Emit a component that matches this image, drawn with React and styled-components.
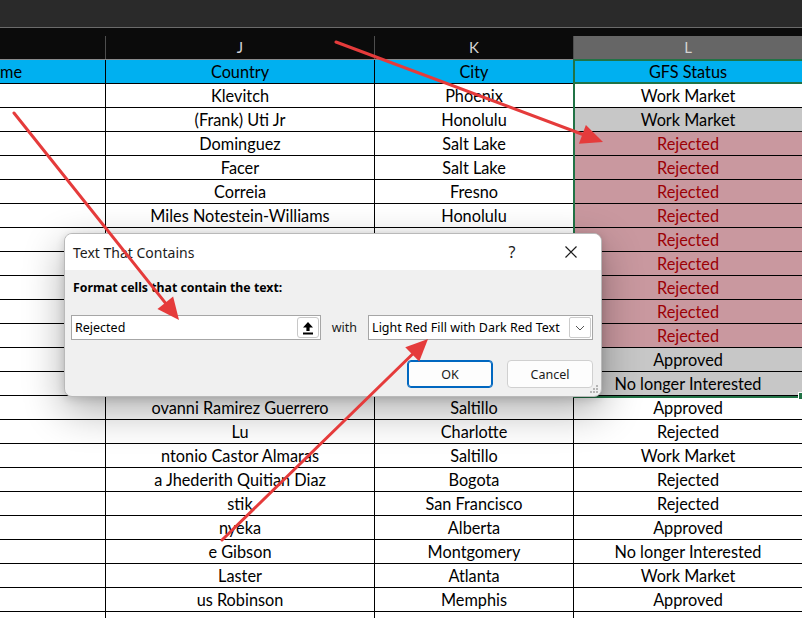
import React from "react";
import styled, { createGlobalStyle } from "styled-components";

const GlobalStyle = createGlobalStyle`
  html, body { margin: 0; padding: 0; background: #ffffff; overflow: hidden; }
  #root { width: 802px; height: 618px; }
`;

const COLS = "106px 269px 199px 1fr";

const Page = styled.div`
  position: relative;
  width: 802px;
  height: 618px;
  overflow: hidden;
  background: #ffffff;
  font-family: Lato, "Liberation Sans", sans-serif;
`;

const TopBar = styled.div`
  height: 27px;
  background: #2a2a2a;
  border-bottom: 1px solid #6b6b6b;
`;

const LetterBar = styled.div`
  display: grid;
  grid-template-columns: ${COLS};
  align-items: end;
  height: 31px;
  background: #0b0b0b;
  border-bottom: 1px solid #8a8a8a;
`;

const Letter = styled.div`
  height: 23px;
  line-height: 23px;
  text-align: center;
  font-size: 15px;
  color: #d4d4d4;
  border-right: ${(p) => (p.$last ? "none" : "1px solid #4e4e4e")};
  background: ${(p) => (p.$selected ? "#666666" : "transparent")};
`;

const Row = styled.div`
  display: grid;
  grid-template-columns: ${COLS};
  height: 24px;
`;

const Cell = styled.div`
  height: 23px;
  line-height: 24px;
  text-align: ${(p) => (p.$left ? "left" : "center")};
  font-size: 16.3px;
  color: ${(p) => p.$color || "#000000"};
  background: ${(p) => p.$bg || "#ffffff"};
  border-bottom: 1px solid #000000;
  border-right: ${(p) => (p.$last ? "none" : "1px solid #000000")};
  white-space: nowrap;
  overflow: hidden;
`;

const Selection = styled.div`
  position: absolute;
  left: 573px;
  top: 59px;
  width: 240px;
  height: 335px;
  border: 2px solid #217346;
  pointer-events: none;
`;

const SelectionHeaderLine = styled.div`
  position: absolute;
  left: 573px;
  top: 82px;
  width: 240px;
  height: 2px;
  background: #217346;
`;

const FillHandle = styled.div`
  position: absolute;
  left: 798px;
  top: 392px;
  width: 6px;
  height: 6px;
  background: #217346;
  border: 1px solid #ffffff;
`;

/* ---------- dialog ---------- */

const Dialog = styled.div`
  position: absolute;
  left: 64px;
  top: 233px;
  width: 538px;
  height: 164px;
  box-sizing: border-box;
  border: 1px solid #b9b9b9;
  border-radius: 8px;
  background: #f0f0f0;
  box-shadow: 0 14px 40px rgba(0, 0, 0, 0.32), 0 2px 8px rgba(0, 0, 0, 0.15);
  overflow: hidden;
  font-family: "Noto Sans", "Open Sans", sans-serif;
  display: flex;
  flex-direction: column;
`;

const TitleBar = styled.div`
  height: 36px;
  background: #ffffff;
  display: flex;
  align-items: center;
  padding-left: 8px;
`;

const Title = styled.div`
  flex: 1;
  font-size: 14px;
  color: #1b1b1b;
  padding-top: 1px;
`;

const TitleButton = styled.div`
  width: ${(p) => p.$w}px;
  height: 36px;
  display: flex;
  align-items: center;
  justify-content: center;
  font-size: 16px;
  color: #1b1b1b;
`;

const Body = styled.div`
  flex: 1;
  display: flex;
  flex-direction: column;
  padding: 0 8px 0 6px;
`;

const Prompt = styled.div`
  margin: 9px 0 0 2px;
  font-size: 12.3px;
  font-weight: 700;
  color: #000000;
  height: 18px;
  line-height: 18px;
`;

const FieldRow = styled.div`
  display: flex;
  align-items: center;
  margin-top: 18px;
  height: 25px;
`;

const TextField = styled.div`
  width: 251px;
  height: 25px;
  box-sizing: border-box;
  border: 1px solid #a6a6a6;
  background: #ffffff;
  display: flex;
  align-items: center;
  padding: 0 1px 0 3px;
`;

const FieldText = styled.div`
  flex: 1;
  font-size: 12.5px;
  color: #000000;
`;

const RefButton = styled.div`
  width: 22px;
  height: 21px;
  box-sizing: border-box;
  border: 1px solid #c8c8c8;
  border-radius: 3px;
  background: #ffffff;
  display: flex;
  align-items: center;
  justify-content: center;
`;

const WithLabel = styled.div`
  font-size: 12.5px;
  color: #1b1b1b;
  margin: 0 11px 0 11px;
`;

const Combo = styled.div`
  width: 226px;
  height: 25px;
  box-sizing: border-box;
  border: 1px solid #a6a6a6;
  background: #ffffff;
  display: flex;
  align-items: center;
  padding: 0 1px 0 3px;
`;

const ComboButton = styled.div`
  width: 22px;
  height: 21px;
  box-sizing: border-box;
  border: 1px solid #cccccc;
  border-radius: 2px;
  background: #ffffff;
  display: flex;
  align-items: center;
  justify-content: center;
`;

const ButtonRow = styled.div`
  display: flex;
  justify-content: flex-end;
  gap: 14px;
  margin-top: 20px;
`;

const Button = styled.div`
  width: 86px;
  height: 28px;
  box-sizing: border-box;
  border-radius: 4px;
  border: 1px solid ${(p) => (p.$primary ? "#0067c0" : "#d0d0d0")};
  box-shadow: ${(p) => (p.$primary ? "inset 0 0 0 1px #0067c0" : "none")};
  background: #fdfdfd;
  display: flex;
  align-items: center;
  justify-content: center;
  font-size: 12.5px;
  color: #1b1b1b;
`;

const Grip = styled.svg`
  position: absolute;
  right: 2px;
  bottom: 2px;
`;

const Overlay = styled.svg`
  position: absolute;
  left: 0;
  top: 0;
  pointer-events: none;
`;

const PINK = "#c9989f";
const GRAY = "#c7c7c7";
const DARKRED = "#9c0006";

const rows = [
  ["Klevitch", "Phoenix", "Work Market", null],
  ["(Frank) Uti Jr", "Honolulu", "Work Market", GRAY],
  ["Dominguez", "Salt Lake", "Rejected", PINK],
  ["Facer", "Salt Lake", "Rejected", PINK],
  ["Correia", "Fresno", "Rejected", PINK],
  ["Miles Notestein-Williams", "Honolulu", "Rejected", PINK],
  ["Brandon Ortiz", "Denver", "Rejected", PINK],
  ["Hernandez", "Austin", "Rejected", PINK],
  ["Kim", "Seattle", "Rejected", PINK],
  ["Patel", "Dallas", "Rejected", PINK],
  ["Nguyen", "Houston", "Rejected", PINK],
  ["Garcia", "Tucson", "Approved", GRAY],
  ["Walker", "Boise", "No longer Interested", GRAY],
  ["ovanni Ramirez Guerrero", "Saltillo", "Approved", null],
  ["Lu", "Charlotte", "Rejected", null],
  ["ntonio Castor Almaras", "Saltillo", "Work Market", null],
  ["a Jhederith Quitian Diaz", "Bogota", "Rejected", null],
  ["stik", "San Francisco", "Rejected", null],
  ["nyeka", "Alberta", "Approved", null],
  ["e Gibson", "Montgomery", "No longer Interested", null],
  ["Laster", "Atlanta", "Work Market", null],
  ["us Robinson", "Memphis", "Approved", null],
  ["", "", "", null],
];

function arrowHead(x1, y1, x2, y2, len = 22, half = 10) {
  const dx = x2 - x1;
  const dy = y2 - y1;
  const d = Math.hypot(dx, dy);
  const ux = dx / d;
  const uy = dy / d;
  const bx = x2 - ux * len;
  const by = y2 - uy * len;
  const px = -uy * half;
  const py = ux * half;
  return {
    line: [x1, y1, bx + ux * 2, by + uy * 2],
    points: `${x2},${y2} ${bx + px},${by + py} ${bx - px},${by - py}`,
  };
}

const arrows = [
  arrowHead(336, 42, 603, 142),
  arrowHead(14, 113, 179, 320),
  arrowHead(222, 540, 428, 339),
];

export default function App() {
  return (
    <>
      <GlobalStyle />
      <Page>
        <TopBar />
        <LetterBar>
          <Letter />
          <Letter>J</Letter>
          <Letter>K</Letter>
          <Letter $selected $last>L</Letter>
        </LetterBar>
        <Row>
          <Cell $bg="#00b0f0" $left>me</Cell>
          <Cell $bg="#00b0f0">Country</Cell>
          <Cell $bg="#00b0f0">City</Cell>
          <Cell $bg="#00b0f0" $last>GFS Status</Cell>
        </Row>
        {rows.map(([a, b, c, fill], i) => (
          <Row key={i}>
            <Cell />
            <Cell>{a}</Cell>
            <Cell>{b}</Cell>
            <Cell $last $bg={fill || "#ffffff"} $color={fill === PINK ? DARKRED : "#000000"}>
              {c}
            </Cell>
          </Row>
        ))}

        <Selection />
        <SelectionHeaderLine />
        <FillHandle />

        <Dialog>
          <TitleBar>
            <Title>Text That Contains</Title>
            <TitleButton $w={58}>?</TitleButton>
            <TitleButton $w={60}>
              <svg width="14" height="14" viewBox="0 0 14 14">
                <path d="M1.5 1.5 L12.5 12.5 M12.5 1.5 L1.5 12.5" stroke="#1b1b1b" strokeWidth="1.2" fill="none" />
              </svg>
            </TitleButton>
          </TitleBar>
          <Body>
            <Prompt>Format cells that contain the text:</Prompt>
            <FieldRow>
              <TextField>
                <FieldText>Rejected</FieldText>
                <RefButton>
                  <svg width="12" height="14" viewBox="0 0 12 14">
                    <path d="M6 1 L11 6.5 L7.6 6.5 L7.6 10 L4.4 10 L4.4 6.5 L1 6.5 Z" fill="#000" />
                    <rect x="1" y="11.5" width="10" height="2" fill="#000" />
                  </svg>
                </RefButton>
              </TextField>
              <WithLabel>with</WithLabel>
              <Combo>
                <FieldText>Light Red Fill with Dark Red Text</FieldText>
                <ComboButton>
                  <svg width="10" height="6" viewBox="0 0 10 6">
                    <path d="M1 1 L5 5 L9 1" stroke="#555" strokeWidth="1" fill="none" />
                  </svg>
                </ComboButton>
              </Combo>
            </FieldRow>
            <ButtonRow>
              <Button $primary>OK</Button>
              <Button>Cancel</Button>
            </ButtonRow>
          </Body>
          <Grip width="9" height="9" viewBox="0 0 9 9">
            <rect x="6" y="0" width="2" height="2" fill="#b5b5b5" />
            <rect x="3" y="3" width="2" height="2" fill="#b5b5b5" />
            <rect x="6" y="3" width="2" height="2" fill="#b5b5b5" />
            <rect x="0" y="6" width="2" height="2" fill="#b5b5b5" />
            <rect x="3" y="6" width="2" height="2" fill="#b5b5b5" />
            <rect x="6" y="6" width="2" height="2" fill="#b5b5b5" />
          </Grip>
        </Dialog>

        <Overlay width="802" height="618" viewBox="0 0 802 618">
          {arrows.map((a, i) => (
            <g key={i}>
              <line
                x1={a.line[0]}
                y1={a.line[1]}
                x2={a.line[2]}
                y2={a.line[3]}
                stroke="#e53b3b"
                strokeWidth="3"
                strokeLinecap="round"
              />
              <polygon points={a.points} fill="#e53b3b" />
            </g>
          ))}
        </Overlay>
      </Page>
    </>
  );
}
